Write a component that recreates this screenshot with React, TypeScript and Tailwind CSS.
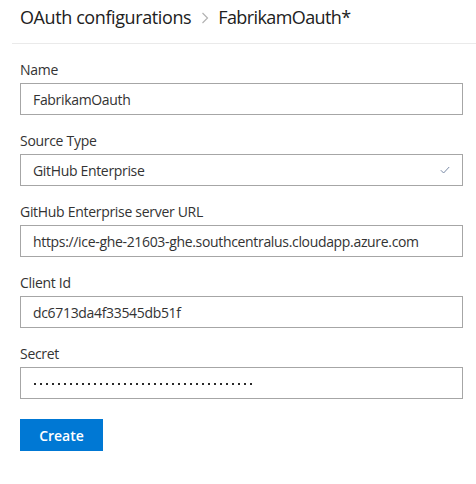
import React from "react";

const font = { fontFamily: '"Segoe UI", "Open Sans", sans-serif' };

function Field({ label, children }: { label: string; children: React.ReactNode }) {
  return (
    <div className="mb-[16px]">
      <div className="text-[14px] leading-[20px] tracking-[-0.3px] text-[#333333] mb-[3px]">{label}</div>
      {children}
    </div>
  );
}

function Box({ children }: { children: React.ReactNode }) {
  return (
    <div className="h-[32px] border border-[#a6a6a6] bg-white flex items-center pl-[12px] pr-[12px] text-[14px] tracking-[-0.33px] text-[#333333]">
      {children}
    </div>
  );
}

export default function App() {
  const dots = Array.from({ length: 37 });
  return (
    <div className="w-[476px] h-[484px] bg-white" style={font}>
      <div className="ml-[12px] border-b border-[#eaeaea] pt-[4px] pb-[12px] pl-[8px] flex items-center">
        <span className="text-[18px] leading-[27px] tracking-[-0.4px] text-[#212121]">OAuth configurations</span>
        <svg width="8" height="12" viewBox="0 0 8 12" className="ml-[10px] mr-[9px]">
          <polyline points="1.5,1 6.5,6 1.5,11" fill="none" stroke="#b3b3b3" strokeWidth="1.2" />
        </svg>
        <span className="text-[18px] leading-[27px] tracking-[-0.6px] text-[#212121]">FabrikamOauth*</span>
      </div>
      <div className="ml-[20px] w-[443px] pt-[16px]">
        <Field label="Name">
          <Box>FabrikamOauth</Box>
        </Field>
        <Field label="Source Type">
          <Box>
            <span className="flex-1">GitHub Enterprise</span>
            <svg width="10" height="8" viewBox="0 0 10 8">
              <polyline points="0.8,4.2 3.6,7 9.2,1" fill="none" stroke="#7a8aa6" strokeWidth="1" />
            </svg>
          </Box>
        </Field>
        <Field label="GitHub Enterprise server URL">
          <Box>https://ice-ghe-21603-ghe.southcentralus.cloudapp.azure.com</Box>
        </Field>
        <Field label="Client Id">
          <Box>dc6713da4f33545db51f</Box>
        </Field>
        <Field label="Secret">
          <Box>
            <div className="flex items-center gap-[4px] pl-[1px] pt-[2px]">
              {dots.map((_, i) => (
                <span key={i} className="block w-[2px] h-[2px] bg-[#2a2a2a]" />
              ))}
            </div>
          </Box>
        </Field>
        <button className="mt-[4px] w-[83px] h-[32px] bg-[#0078d4] text-white text-[14px] font-semibold">
          Create
        </button>
      </div>
    </div>
  );
}
